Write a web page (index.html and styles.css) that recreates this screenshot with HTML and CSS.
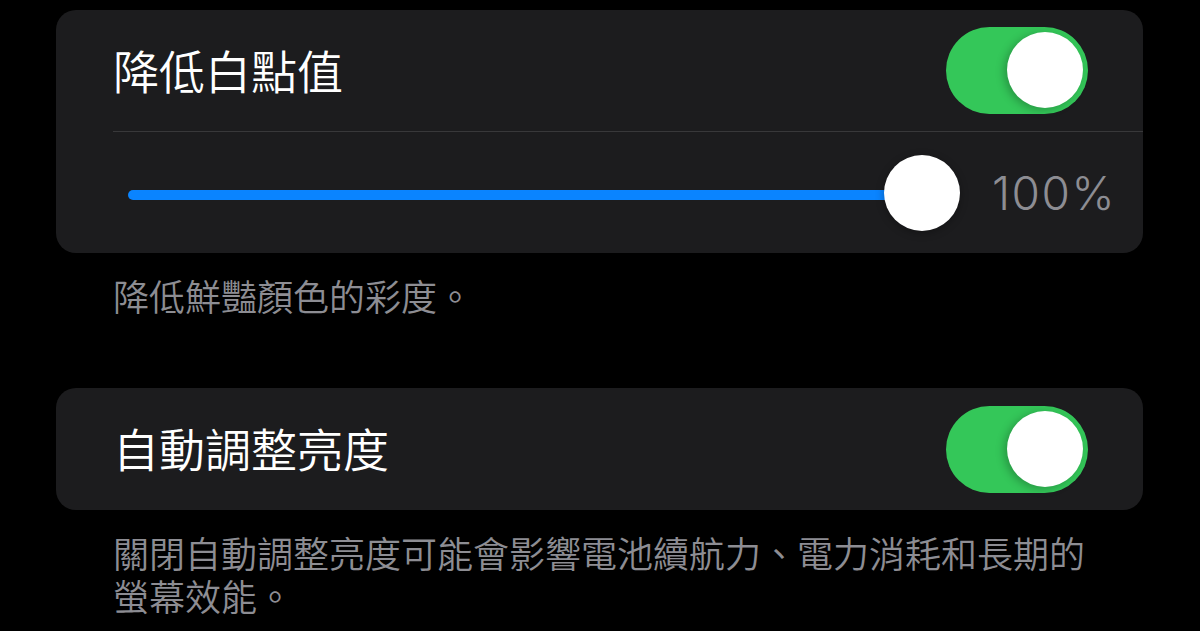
FILE: index.html
```html
<!DOCTYPE html>
<html lang="zh-Hant">
<head>
    <meta charset="UTF-8">
    <meta name="viewport" content="width=device-width, initial-scale=1.0">
    <title>顯示與文字大小</title>
    <link rel="stylesheet" href="styles.css">
</head>
<body>
    <div class="page">
        <div class="group">
            <div class="row">
                <span class="label">降低白點值</span>
                <div class="switch on"><span class="knob"></span></div>
            </div>
            <div class="separator"></div>
            <div class="row slider-row">
                <div class="slider">
                    <div class="track"></div>
                    <span class="thumb"></span>
                </div>
                <span class="value">100%</span>
            </div>
        </div>
        <p class="note">降低鮮豔顏色的彩度。</p>

        <div class="group">
            <div class="row single">
                <span class="label">自動調整亮度</span>
                <div class="switch on"><span class="knob"></span></div>
            </div>
        </div>
        <p class="note">關閉自動調整亮度可能會影響電池續航力、電力消耗和長期的螢幕效能。</p>
    </div>
</body>
</html>
```

FILE: styles.css
```css
body {
    margin: 0;
    padding: 0;
    background-color: #000;
    color: #fff;
    font-family: "Inter", "Noto Sans CJK TC", sans-serif;
}
.page {
    padding: 10px 57px 0 56px;
}
.group {
    background-color: #1c1c1e;
    border-radius: 20px;
}
.row {
    display: flex;
    align-items: center;
    justify-content: space-between;
    height: 121px;
    padding: 0 55px 0 57px;
}
.row.single {
    height: 122px;
}
.label {
    font-size: 46px;
    font-weight: 350;
    line-height: 1;
    padding-top: 2px;
}
.separator {
    height: 1px;
    margin-left: 57px;
    background-color: #38383a;
}
.switch {
    position: relative;
    width: 142px;
    height: 87px;
    border-radius: 44px;
    background-color: #3a3a3c;
}
.switch.on {
    background-color: #34c759;
}
.switch .knob {
    position: absolute;
    top: 5px;
    right: 5px;
    width: 76px;
    height: 76px;
    border-radius: 50%;
    background-color: #fff;
    box-shadow: -3px 2px 8px rgba(0, 0, 0, 0.25);
}
.slider-row {
    padding: 0 28px 0 72px;
    justify-content: flex-start;
}
.slider {
    position: relative;
    flex: 1;
    height: 76px;
    display: flex;
    align-items: center;
}
.track {
    width: 100%;
    height: 10px;
    margin-top: 5px;
    margin-right: 40px;
    border-radius: 5px;
    background-color: #0a84ff;
}
.thumb {
    position: absolute;
    right: 0;
    top: 0;
    width: 76px;
    height: 76px;
    border-radius: 50%;
    background-color: #fff;
    box-shadow: 0 2px 8px rgba(0, 0, 0, 0.3);
}
.value {
    width: 123px;
    margin-left: 32px;
    font-size: 46px;
    font-weight: 300;
    color: #8d8d93;
    letter-spacing: 1.5px;
}
.note {
    margin: 0 0 68px;
    padding: 24px 43px 0 57px;
    font-size: 36px;
    font-weight: 350;
    line-height: 43px;
    color: #8d8d93;
}
```
